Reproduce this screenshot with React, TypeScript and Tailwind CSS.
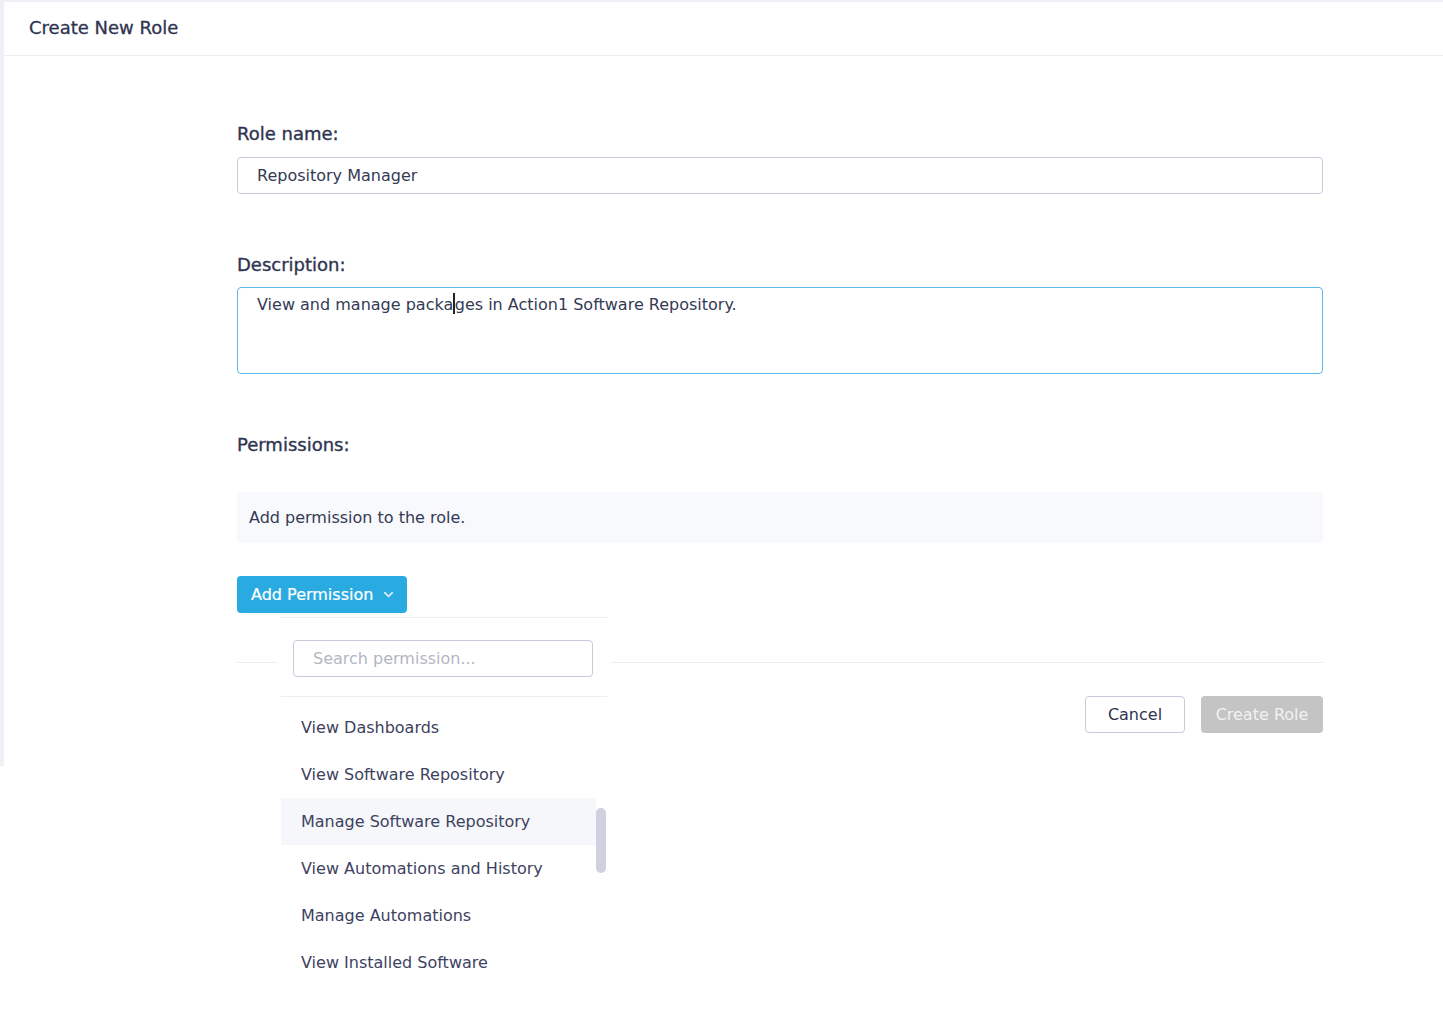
import { ChevronDown } from "lucide-react";

const permissions = [
  "View Dashboards",
  "View Software Repository",
  "Manage Software Repository",
  "View Automations and History",
  "Manage Automations",
  "View Installed Software",
];

function PermissionMenu() {
  return (
    <div className="absolute left-[40px] top-[41px] z-10 w-[334px] bg-white">
      <div className="mx-1 border-t border-[#eceef4]" />
      <div className="pb-[19px] pl-4 pr-[18px] pt-[22px]">
        <input
          className="h-[37px] w-full rounded-[4px] border border-[#c9cadb] px-[19px] text-[16px] text-[#343a55] outline-none placeholder:text-[#b4b6c4]"
          placeholder="Search permission..."
        />
      </div>
      <div className="mx-1 border-t border-[#eceef4]" />
      <div className="relative mx-1 pt-[7px]">
        <ul>
          {permissions.map((p, i) => (
            <li
              key={p}
              className={`flex h-[47px] items-center pl-5 text-[16px] text-[#3d4260] ${
                i === 2 ? "mr-[11px] bg-[#f6f7fb]" : ""
              }`}
            >
              {p}
            </li>
          ))}
        </ul>
        <div className="absolute right-[1px] top-[111px] h-[65px] w-[10px] rounded-full bg-[#cfd0e0]" />
      </div>
    </div>
  );
}

export default function App() {
  return (
    <div className="min-h-screen bg-white font-['DejaVu_Sans',sans-serif] text-[#2f3450]">
      <div className="h-[766px] bg-[#eff0f6] pl-1 pt-[2px]">
        <div className="h-full bg-white">
          <header className="flex h-[54px] items-center border-b border-[#ebedf2] pb-[2px] pl-[25px]">
            <h1 className="text-[18px] font-medium text-[#2f3450] [-webkit-text-stroke:0.3px_#2f3450]">
              Create New Role
            </h1>
          </header>

          <div className="ml-[233px] w-[1086px] pt-[65px]">
            <label className="block text-[18px] font-medium leading-[26px] [-webkit-text-stroke:0.35px_#2f3450]">
              Role name:
            </label>
            <input
              className="mt-[10px] h-[37px] w-full rounded-[4px] border border-[#c9cadb] px-[19px] text-[16px] text-[#343a55] outline-none"
              defaultValue="Repository Manager"
            />

            <label className="mt-[58px] block text-[18px] font-medium leading-[26px] [-webkit-text-stroke:0.35px_#2f3450]">
              Description:
            </label>
            <div className="mt-[9px] h-[87px] w-full rounded-[4px] border border-[#5cb8e9] px-[19px] pt-[1px] text-[16px] leading-[24px] text-[#343a55]">
              View and manage packa
              <span className="inline-block h-[21px] w-[1.5px] translate-y-[4px] bg-[#222]" />
              ges in Action1 Software Repository.
            </div>

            <label className="mt-[58px] block text-[18px] font-medium leading-[26px] [-webkit-text-stroke:0.35px_#2f3450]">
              Permissions:
            </label>

            <div className="mt-[34px] flex h-[51px] items-center rounded-[4px] bg-[#f8f9fd] px-3 text-[16px] text-[#343a55]">
              Add permission to the role.
            </div>

            <div className="relative mt-[33px]">
              <button className="flex h-[37px] w-[170px] items-center gap-2 rounded-[4px] bg-[#29abe2] pl-[14px] text-[16px] font-medium text-white [-webkit-text-stroke:0.2px_#ffffff]">
                Add Permission
                <ChevronDown size={15} strokeWidth={3} className="text-[#cfeefa]" />
              </button>
              <PermissionMenu />
            </div>

            <div className="mt-[49px] border-t border-[#ebecf3]" />

            <div className="mt-[33px] flex justify-end gap-4">
              <button className="h-[37px] w-[100px] rounded-[4px] border border-[#c9cadb] text-[16px] text-[#2f3450]">
                Cancel
              </button>
              <button className="h-[37px] w-[122px] rounded-[4px] bg-[#c4c4c4] text-[16px] font-medium text-[#f2f2f2]">
                Create Role
              </button>
            </div>
          </div>
        </div>
      </div>
    </div>
  );
}
